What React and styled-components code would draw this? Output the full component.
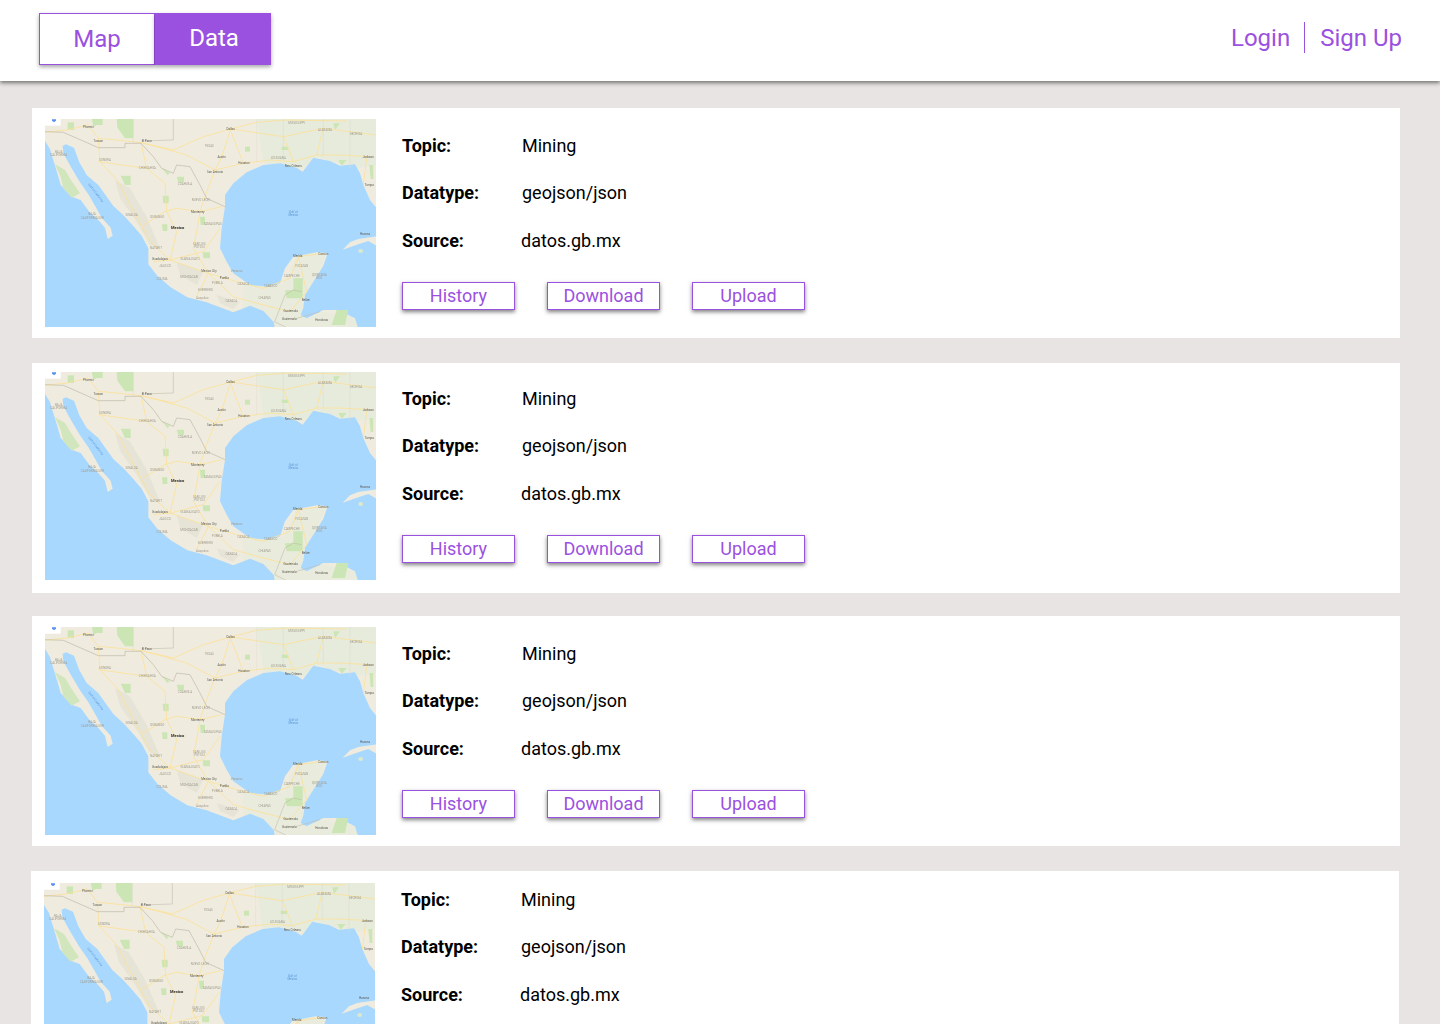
import React from "react";
import styled, { createGlobalStyle } from "styled-components";

const purple = "#9B51E0";

const Global = createGlobalStyle`
  html, body { margin: 0; padding: 0; background: #E8E4E4; }
  body { font-family: Roboto, "Liberation Sans", sans-serif; color: #000; }
  #root { height: 1024px; overflow: hidden; }
`;

const Page = styled.div`
  height: 1024px;
  overflow: hidden;
  background: #E8E4E4;
`;

const Header = styled.header`
  height: 81px;
  background: #fff;
  box-shadow: 0 2px 4px rgba(0, 0, 0, 0.5);
  display: flex;
  align-items: flex-start;
  justify-content: space-between;
  padding: 13px 38px 0 39px;
  box-sizing: border-box;
  position: relative;
  z-index: 1;
`;

const Toggle = styled.div`
  display: flex;
`;

const ToggleButton = styled.button`
  width: 116px;
  height: 52px;
  box-sizing: border-box;
  border: 1px solid ${purple};
  background: ${(p) => (p.$active ? purple : "#fff")};
  color: ${(p) => (p.$active ? "#fff" : purple)};
  font: 400 24px/1 Roboto, sans-serif;
  padding: ${(p) => (p.$active ? "0 0 3px 2px" : "0 0 1px")};
  box-shadow: 0 2px 4px rgba(0, 0, 0, 0.35);
`;

const AuthNav = styled.nav`
  display: flex;
  align-items: center;
  margin-top: 9px;
  height: 30px;
`;

const AuthLink = styled.a`
  font-size: 24px;
  line-height: 30px;
  padding-top: 1px;
  color: ${purple};
  & + & {
    border-left: 1px solid ${purple};
    margin-left: 14px;
    padding-left: 15px;
  }
`;

const List = styled.main`
  display: flex;
  flex-direction: column;
  padding-top: 27px;
`;

const Card = styled.article`
  width: 1368px;
  height: 230px;
  box-sizing: border-box;
  flex: none;
  background: #fff;
  display: flex;
  margin-left: ${(p) => p.$left}px;
  margin-top: ${(p) => p.$gap}px;
  padding-top: ${(p) => p.$mapTop}px;
  padding-left: 13px;
`;

const MapFrame = styled.svg`
  width: 331px;
  height: 208px;
  display: block;
  flex: none;
`;

const Info = styled.div`
  margin-left: 26px;
  padding-top: ${(p) => p.$top}px;
  display: flex;
  flex-direction: column;
`;

const Row = styled.div`
  display: flex;
  height: 21px;
  font-size: 18px;
  line-height: 21px;
  margin-bottom: ${(p) => p.$after}px;
`;

const Label = styled.span`
  width: ${(p) => p.$width}px;
  font-weight: 700;
`;

const Value = styled.span`
  font-weight: 400;
`;

const Actions = styled.div`
  display: flex;
  gap: 32px;
`;

const ActionButton = styled.button`
  width: 113px;
  height: 28px;
  box-sizing: border-box;
  border: 1px solid ${purple};
  background: #fff;
  color: ${purple};
  font: 400 18px/1 Roboto, sans-serif;
  padding: 0;
  box-shadow: 0 2px 4px rgba(0, 0, 0, 0.5);
`;

const MapLabel = styled.text`
  font-family: Roboto, sans-serif;
  font-size: ${(p) => p.$size || 9}px;
  font-weight: ${(p) => (p.$bold ? 700 : 400)};
  fill: ${(p) => p.$fill || "#a09c8e"};
  text-anchor: middle;
`;

const labels = [
  ["Phoenix", 175, 68, 1], ["Tucson", 205, 110, 1], ["El Paso", 350, 110, 1], ["TEXAS", 538, 126],
  ["Dallas", 602, 76, 1], ["Austin", 575, 160, 1], ["Houston", 642, 176, 1], ["San Antonio", 555, 203, 1],
  ["LOUISIANA", 745, 163], ["New Orleans", 790, 185, 1], ["MISSISSIPPI", 800, 57], ["ALABAMA", 885, 79], ["GEORGIA", 978, 89],
  ["Jackson", 1015, 158, 1], ["Tampa", 1018, 244, 1], ["BAJA", 86, 144], ["CALIFORNIA", 86, 153],
  ["SONORA", 225, 167], ["CHIHUAHUA", 352, 192], ["COAHUILA", 465, 240], ["NUEVO LEON", 512, 287], ["Monterrey", 503, 324, 1],
  ["SINALOA", 305, 332], ["DURANGO", 382, 339], ["TAMAULIPAS", 548, 361], ["BAJA", 186, 331], ["CALIFORNIA SUR", 187, 341],
  ["NAYARIT", 378, 432], ["SAN LUIS", 508, 419], ["POTOSI", 508, 429], ["Guadalajara", 390, 465, 1], ["GUANAJUATO", 480, 464],
  ["JALISCO", 405, 487], ["COLIMA", 396, 526], ["MICHOACAN", 477, 518], ["Mexico City", 537, 502, 1], ["Veracruz", 620, 501], ["Puebla", 583, 522, 1],
  ["PUEBLA", 562, 538], ["OAXACA", 640, 539], ["GUERRERO", 526, 558], ["OAXACA", 604, 590], ["Acapulco", 517, 582],
  ["TABASCO", 722, 545], ["CHIAPAS", 704, 582], ["CAMPECHE", 785, 517], ["YUCATAN", 815, 485], ["Merida", 803, 456, 1], ["Cancun", 880, 450, 1],
  ["QUINTANA", 868, 512], ["ROO", 868, 522], ["Belize", 827, 589, 1], ["Guatemala", 782, 622, 1], ["Guatemala", 778, 646, 1],
  ["Honduras", 875, 648, 1], ["Havana", 1005, 389, 1],
];

function MexicoMap({ id }) {
  return (
    <MapFrame viewBox="45 42 993 624" preserveAspectRatio="none" aria-hidden="true">
      <defs>
        <filter id={id} x="-2%" y="-2%" width="104%" height="104%">
          <feGaussianBlur stdDeviation="1.6" />
        </filter>
      </defs>
      <rect x="45" y="42" width="993" height="624" fill="#A9D8FF" />
      <g filter={`url(#${id})`}>
        <path fill="#EFECDF" d="M40 38H1042V670H40Z" />
        <path fill="#E7EBDC" d="M680 38H1042V180L980 190 930 178 860 155 820 190 700 175Z" />
        <path fill="#E9EBDC" d="M640 540L760 540 800 450 890 445 850 530 820 610 985 640 985 670H640Z" />
        {/* Pacific & Gulf of California */}
        <path fill="#A9D8FF" d="M40 100L60 132 72 172 82 205 92 240 125 275 152 285 178 320 205 345 225 368 233 402 248 392 242 368 215 338 195 302 175 268 150 232 125 190 100 145 98 122 108 118 132 128 148 172 170 210 205 240 250 303 282 332 312 365 335 392 355 430 355 478 382 512 422 547 472 577 530 592 610 622 660 602 700 618 732 652 734 672H40Z" />
        {/* Gulf of Mexico & Caribbean */}
        <path fill="#A9D8FF" d="M585 305L585 270 610 235 650 202 700 180 750 175 800 188 818 200 850 158 900 168 930 182 975 178 990 205 1000 240 1020 285 1042 312V672H985L975 640 925 615 880 615 830 640 812 630 820 608 825 570 850 530 880 482 893 445 860 442 790 455 765 490 750 535 720 545 660 540 610 505 590 470 570 430 575 370Z" />
        <path fill="#EFECDF" d="M938 434L960 412 985 402 1042 394V424L1015 408 985 418Z" />
        <ellipse cx="992" cy="438" rx="7" ry="6" fill="#DCE9CB" />
        <path fill="#D1E6BC" d="M75 178L105 195 125 228 150 265 125 278 100 250 92 215Z" />
        <g fill="#CBE6B4">
          <path d="M113 52H132V75H113Z" />
          <path d="M185 38H218V60H200L190 66Z" />
          <path d="M260 38H310V100H285L262 68Z" />
          <path d="M272 212H302V240H285Z" />
          <path d="M398 272H416V295H400Z" />
          <path d="M396 358H412V378H398Z" />
          <path d="M510 335H525V360H512Z" />
          <path d="M518 442H540V460H520Z" />
          <path d="M790 520H818V580H770L765 556 790 555Z" />
          <path d="M920 615H955L945 660H905Z" />
          <path d="M925 165H950L935 182Z" />
          <path d="M645 125H660V140H645Z" />
          <path d="M755 125H775V135H755Z" />
          <path d="M910 55H930L915 75Z" />
          <path d="M1018 180H1030V222H1022Z" />
          <path d="M395 188L420 205 412 210Z" />
          <path d="M440 215H462V232H445Z" />
        </g>
        <g fill="#C9CBBE" opacity="0.22">
          <path d="M255 225L300 250 350 335 390 430 360 420 320 350 270 280Z" />
          <path d="M560 570L630 590 610 612 570 595Z" />
          <path d="M440 470L520 500 500 540 450 510Z" />
        </g>
        <g fill="none" stroke="#FBE19A" strokeWidth="2.6" strokeLinejoin="round">
          <path d="M45 82L110 75 175 60 205 100 260 105 333 113 430 135 520 95 602 72 680 52 770 45 950 48" />
          <path d="M333 113L400 130 470 150 555 195 640 175 720 165 790 170 860 150 930 150 1020 155" />
          <path d="M602 72L575 157 555 195 530 260 510 320 500 380 490 430 535 505 620 530 700 550 780 520 805 455 880 445" />
          <path d="M602 72L760 95 880 70 1038 90" />
          <path d="M333 113L350 190 405 235 410 320 440 380 420 465 535 505" />
          <path d="M510 320L440 310 405 320 340 360" />
          <path d="M510 320L575 305" />
          <path d="M420 465L370 470M535 505L500 575M535 505L610 575 700 600 780 620 830 560 805 455" />
          <path d="M205 100L210 170 265 230 300 300 360 410 420 465" />
          <path d="M570 370L520 440 420 465" />
          <path d="M1000 240L1010 160M860 150L880 70" />
          <path d="M205 170L350 190M640 175L600 72M760 95L790 170" />
        </g>
        <path fill="none" stroke="#BDB8A8" strokeWidth="2" d="M45 80L100 82 205 128H285V115H333L370 155 395 190 430 205 440 180 480 185 510 240 530 280 585 305" />
        <path fill="none" stroke="#BDB8A8" strokeWidth="1.6" d="M734 650L765 570 790 555 815 560M734 650L770 668M800 640L870 620M430 42V105L335 108" />
        <path fill="none" stroke="#DDDDCE" strokeWidth="1.4" d="M760 42V165M880 42V150M960 42V190M680 42V170M310 42V115" />
        {labels.map(([t, x, y, dark], i) => (
          <MapLabel key={i} x={x} y={y} $fill={dark ? "#5e5c55" : undefined}>{t}</MapLabel>
        ))}
        <MapLabel x={443} y={372} $size={12} $bold $fill="#2c2b28">Mexico</MapLabel>
        <MapLabel x={790} y={324} $fill="#5f97d2">Gulf of</MapLabel>
        <MapLabel x={790} y={334} $fill="#5f97d2">Mexico</MapLabel>
        <MapLabel x={195} y={265} $fill="#5f97d2" transform="rotate(52 195 265)">Gulf of California</MapLabel>
      </g>
      <rect x="45" y="42" width="47" height="20" fill="#fff" />
      <path fill="#5B8FF0" d="M66 43h12v4l-6 5-6-5z" />
    </MapFrame>
  );
}

const cards = [
  { left: 32, gap: 0, mapTop: 11, infoTop: 16 },
  { left: 32, gap: 25, mapTop: 9, infoTop: 16 },
  { left: 32, gap: 23, mapTop: 11, infoTop: 16 },
  { left: 31, gap: 25, mapTop: 12, infoTop: 6 },
];

const actions = ["History", "Download", "Upload"];

export default function App() {
  return (
    <Page>
      <Global />
      <Header>
        <Toggle>
          <ToggleButton>Map</ToggleButton>
          <ToggleButton $active>Data</ToggleButton>
        </Toggle>
        <AuthNav>
          <AuthLink>Login</AuthLink>
          <AuthLink>Sign Up</AuthLink>
        </AuthNav>
      </Header>
      <List>
        {cards.map((c, i) => (
          <Card key={i} $left={c.left} $gap={c.gap} $mapTop={c.mapTop}>
            <MexicoMap id={`map-blur-${i}`} />
            <Info $top={c.infoTop}>
              <Row $after={26}>
                <Label $width={120}>Topic:</Label>
                <Value>Mining</Value>
              </Row>
              <Row $after={27}>
                <Label $width={120}>Datatype:</Label>
                <Value>geojson/json</Value>
              </Row>
              <Row $after={31}>
                <Label $width={119}>Source:</Label>
                <Value>datos.gb.mx</Value>
              </Row>
              <Actions>
                {actions.map((a) => (
                  <ActionButton key={a}>{a}</ActionButton>
                ))}
              </Actions>
            </Info>
          </Card>
        ))}
      </List>
    </Page>
  );
}
